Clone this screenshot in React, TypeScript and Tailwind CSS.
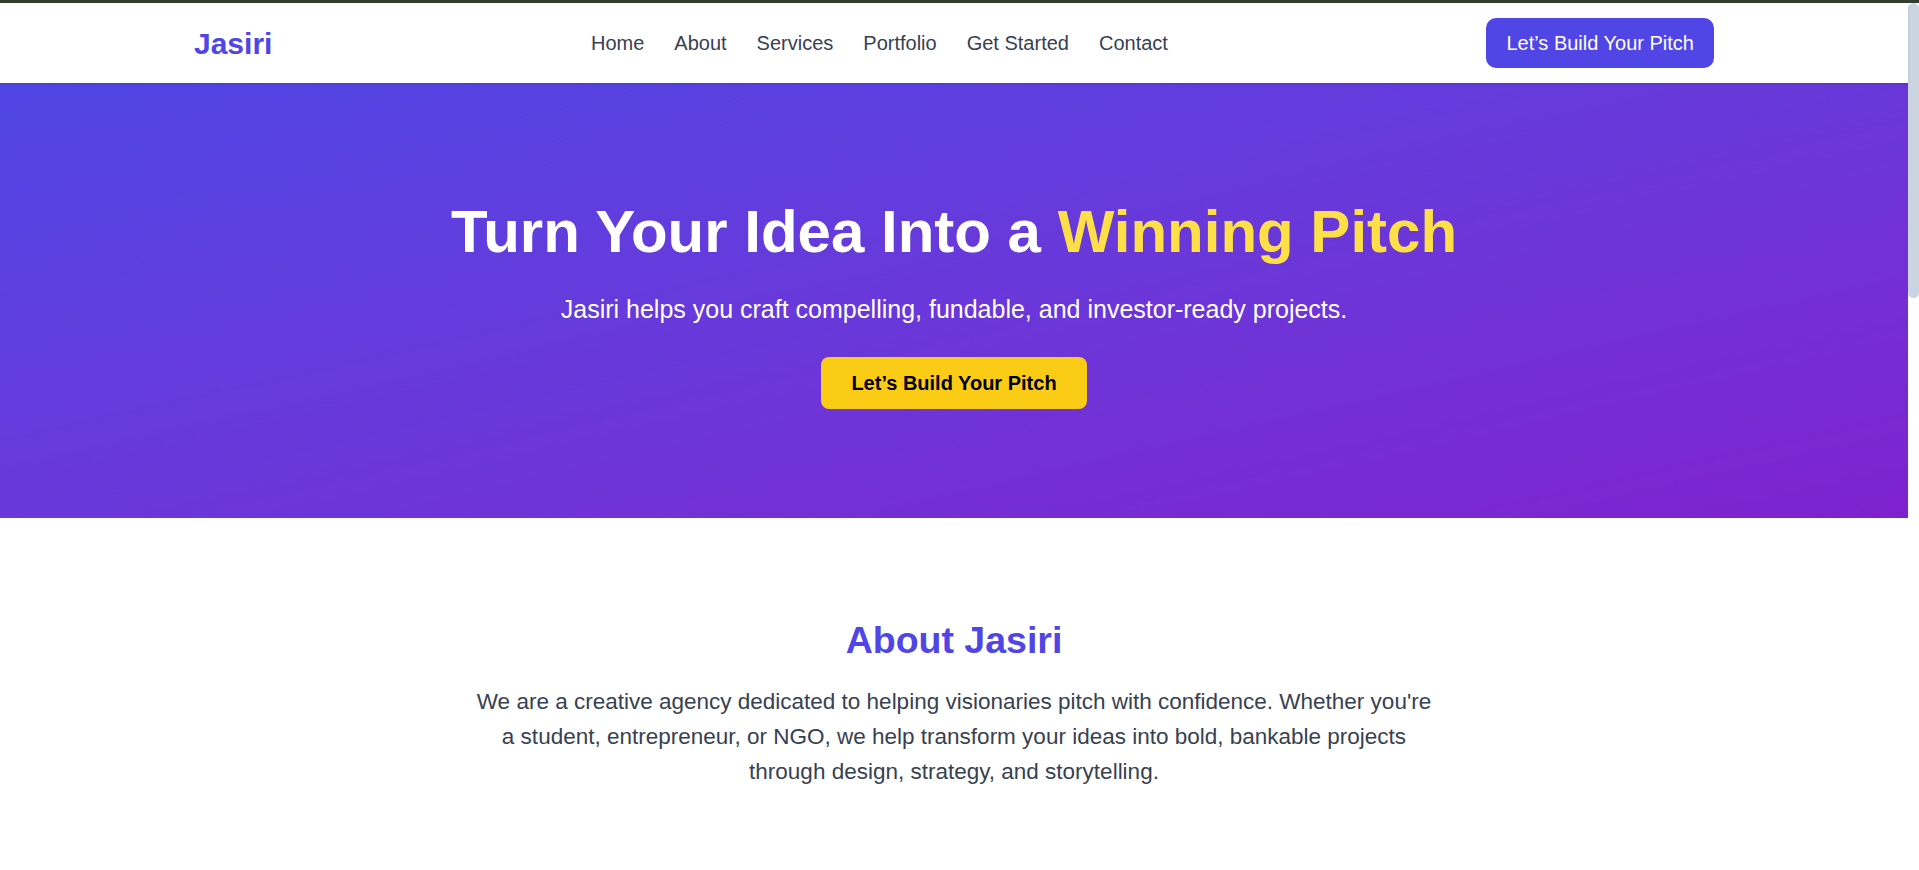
import React from "react";

const links = ["Home", "About", "Services", "Portfolio", "Get Started", "Contact"];

const Navbar = () => (
  <nav className="relative z-10 h-[80px] shrink-0 bg-white shadow-sm">
    <div className="mx-auto flex h-full max-w-[1600px] items-center justify-between px-10">
      <a href="#" className="text-[30px] font-bold text-[#4f46e5]">
        Jasiri
      </a>
      <ul className="flex gap-[30px] text-[20px] text-[#374151]">
        {links.map((l) => (
          <li key={l}>
            <a href="#" className="hover:text-[#4f46e5]">
              {l}
            </a>
          </li>
        ))}
      </ul>
      <button className="h-[50px] rounded-[10px] bg-[#4f46e5] px-5 text-[20px] leading-[30px] text-white hover:bg-[#4338ca]">
        Let’s Build Your Pitch
      </button>
    </div>
  </nav>
);

const Hero = () => (
  <section className="bg-gradient-to-br from-[#4f46e5] to-[#7e22ce] pt-[119px] pb-[109px] text-center text-white">
    <h1 className="text-[60px] leading-none font-bold">
      Turn Your Idea Into a <span className="text-[#fde047]">Winning Pitch</span>
    </h1>
    <p className="mt-[30px] text-[25px] leading-[35px]">
      Jasiri helps you craft compelling, fundable, and investor-ready projects.
    </p>
    <div className="mt-[30px] flex justify-center">
      <button className="flex h-[52px] items-center rounded-lg bg-[#facc15] px-[30px] text-[20px] font-bold text-black hover:bg-[#eab308]">
        Let’s Build Your Pitch
      </button>
    </div>
  </section>
);

const About = () => (
  <section className="bg-white py-[100px] text-center">
    <h2 className="mb-[21px] text-[37.5px] leading-[45px] font-bold text-[#4f46e5]">About Jasiri</h2>
    <p className="mx-auto max-w-[960px] text-[22.5px] leading-[35px] text-[#374151]">
      We are a creative agency dedicated to helping visionaries pitch with confidence. Whether you're a student,
      entrepreneur, or NGO, we help transform your ideas into bold, bankable projects through design, strategy, and
      storytelling.
    </p>
  </section>
);

// the window's scrollbar, as the screenshot shows it
const ScrollBar = () => (
  <div className="w-[11px] shrink-0 bg-white">
    <div className="h-[295px] rounded-full bg-[#cbd5e1]" />
  </div>
);

export default function App() {
  return (
    <div className="flex h-screen flex-col overflow-hidden font-['Liberation_Sans',Arial,sans-serif]">
      <div className="h-[3px] shrink-0 bg-[#333d2c]" />
      <div className="flex min-h-0 flex-1">
        <main className="flex min-w-0 flex-1 flex-col bg-white">
          <Navbar />
          <Hero />
          <About />
        </main>
        <ScrollBar />
      </div>
    </div>
  );
}
